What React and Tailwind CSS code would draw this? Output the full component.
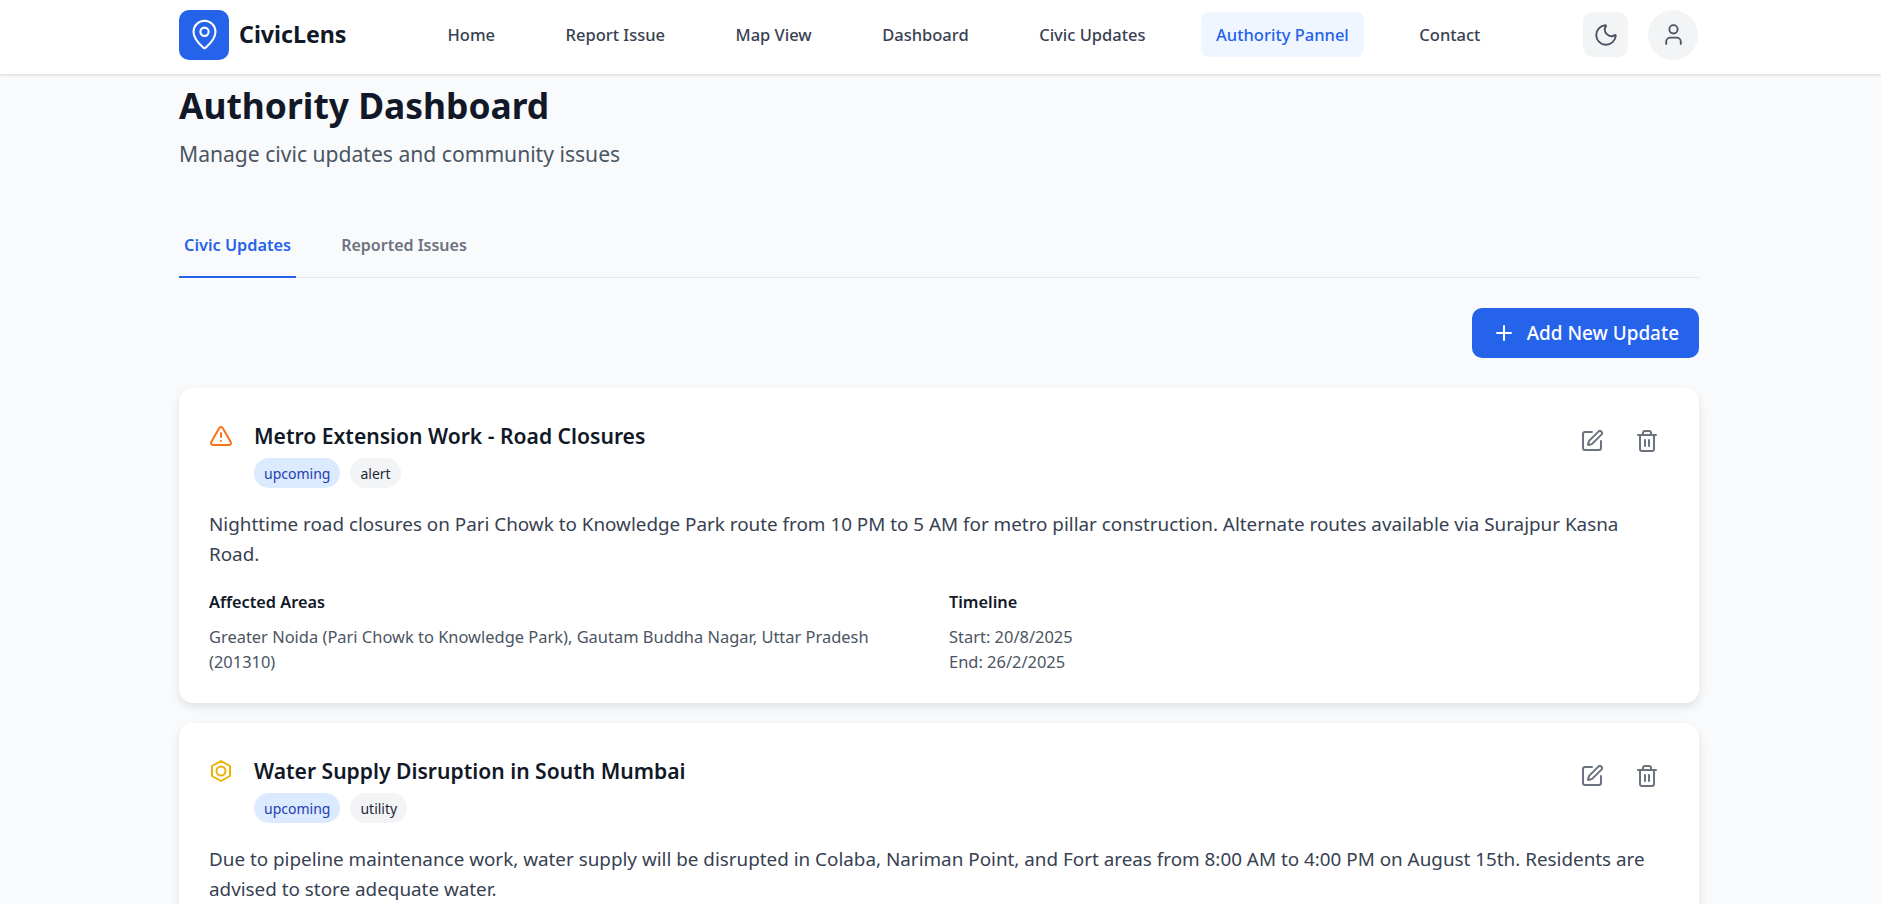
import { MapPin, Moon, User, Plus, SquarePen, Trash2, TriangleAlert } from 'lucide-react'

const navItems = ['Home', 'Report Issue', 'Map View', 'Dashboard', 'Civic Updates', 'Authority Pannel', 'Contact']

const updates = [
  {
    title: 'Metro Extension Work - Road Closures',
    type: 'alert',
    description:
      'Nighttime road closures on Pari Chowk to Knowledge Park route from 10 PM to 5 AM for metro pillar construction. Alternate routes available via Surajpur Kasna Road.',
    areas: 'Greater Noida (Pari Chowk to Knowledge Park), Gautam Buddha Nagar, Uttar Pradesh (201310)',
    start: '20/8/2025',
    end: '26/2/2025',
  },
  {
    title: 'Water Supply Disruption in South Mumbai',
    type: 'utility',
    description:
      'Due to pipeline maintenance work, water supply will be disrupted in Colaba, Nariman Point, and Fort areas from 8:00 AM to 4:00 PM on August 15th. Residents are advised to store adequate water.',
    areas: 'Colaba, Nariman Point, Fort, South Mumbai, Maharashtra (400001)',
    start: '15/8/2025',
    end: '15/8/2025',
  },
]

function UtilityIcon() {
  return (
    <svg viewBox="0 0 24 24" className="w-6 h-6 text-[#eab308]" fill="none" stroke="currentColor" strokeWidth="2" strokeLinejoin="round">
      <path d="M12 2l9 5v10l-9 5-9-5V7z" />
      <circle cx="12" cy="12" r="4.500" />
    </svg>
  )
}

function UpdateCard({ update }) {
  return (
    <div className="bg-white rounded-[14px] shadow-[0_4px_10px_rgba(0,0,0,0.1)] px-[30px] pt-[34px] pb-[29px]">
      <div className="flex justify-between">
        <div className="flex">
          <div className="w-[45px] pt-[2px] shrink-0">
            {update.type === 'alert' ? <TriangleAlert className="w-6 h-6 text-[#f97316]" /> : <UtilityIcon />}
          </div>
          <div>
            <h3 className="text-[21.100px] leading-[28px] font-semibold text-[#111827]">{update.title}</h3>
            <div className="flex gap-[10px] mt-[8px]">
              <span className="h-[30px] px-[10px] flex items-center rounded-full bg-[#dbeafe] text-[#1e40af] text-[14px]">upcoming</span>
              <span className="h-[30px] px-[10px] flex items-center rounded-full bg-[#f3f4f6] text-[#1f2937] text-[14px]">{update.type}</span>
            </div>
          </div>
        </div>
        <div className="flex gap-[31px] pr-[10px] pt-[7px] text-[#6b7280]">
          <SquarePen className="w-6 h-6" />
          <Trash2 className="w-6 h-6" />
        </div>
      </div>
      <p className="mt-[21px] text-[18.850px] leading-[30px] text-[#374151]">{update.description}</p>
      <div className="grid grid-cols-2 gap-[20px] mt-[21px]">
        <div>
          <h4 className="text-[16.300px] leading-[24px] font-semibold text-[#111827]">Affected Areas</h4>
          <p className="mt-[10px] text-[16.450px] leading-[25px] text-[#4b5563]">{update.areas}</p>
        </div>
        <div>
          <h4 className="text-[16.300px] leading-[24px] font-semibold text-[#111827]">Timeline</h4>
          <p className="mt-[10px] text-[16.450px] leading-[25px] text-[#4b5563]">Start: {update.start}</p>
          <p className="text-[16.450px] leading-[25px] text-[#4b5563]">End: {update.end}</p>
        </div>
      </div>
    </div>
  )
}

export default function App() {
  return (
    <div className="h-[904px] overflow-hidden bg-[#f9fafb] font-['Noto_Sans',sans-serif]">
      <header className="h-[74px] bg-white shadow-[0_1px_3px_rgba(0,0,0,0.15)] relative">
        <div className="w-[1520px] ml-[179px] h-full pb-[5px] flex items-center">
          <div className="w-[50px] h-[50px] rounded-[10px] bg-[#2563eb] flex items-center justify-center text-white">
            <MapPin className="w-[33px] h-[33px]" strokeWidth={1.5} />
          </div>
          <span className="ml-[10px] text-[23.200px] font-bold text-[#111827]">CivicLens</span>
          <nav className="flex ml-[86px] gap-[40.500px]">
            {navItems.map((item) => (
              <a
                key={item}
                className={`h-[45px] px-[15px] pt-[2px] flex items-center rounded-[8px] text-[16.500px] font-medium ${
                  item === 'Authority Pannel' ? 'bg-[#eff6ff] text-[#2563eb]' : 'text-[#374151]'
                }`}
              >
                {item}
              </a>
            ))}
          </nav>
          <div className="ml-auto pr-[1px] flex items-center gap-[20px]">
            <button className="w-[45px] h-[45px] rounded-[10px] bg-[#f3f4f6] flex items-center justify-center text-[#4b5563]">
              <Moon className="w-[26px] h-[26px]" strokeWidth={1.8} />
            </button>
            <button className="w-[50px] h-[50px] rounded-full bg-[#f3f4f6] flex items-center justify-center text-[#4b5563]">
              <User className="w-[25px] h-[25px]" strokeWidth={1.8} />
            </button>
          </div>
        </div>
      </header>
      <main className="w-[1520px] ml-[179px]">
        <h1 className="text-[35.400px] leading-[48px] mt-[7px] font-bold text-[#111827]">Authority Dashboard</h1>
        <p className="text-[21.100px] leading-[30px] mt-[10px] text-[#4b5563]">Manage civic updates and community issues</p>
        <div className="flex gap-[40px] mt-[45px] border-b border-[#e5e7eb] h-[64px]">
          <button className="px-[5px] h-[64px] text-[16.300px] font-semibold text-[#2563eb] border-b-2 border-[#2563eb]">Civic Updates</button>
          <button className="px-[5px] pb-[2px] h-[64px] text-[16px] font-semibold text-[#6b7280]">Reported Issues</button>
        </div>
        <div className="flex justify-end mt-[30px]">
          <button className="h-[50px] px-[20px] rounded-[10px] bg-[#2563eb] text-white flex items-center gap-[11px] text-[18.900px] font-medium">
            <Plus className="w-6 h-6" />
            Add New Update
          </button>
        </div>
        <div className="flex flex-col gap-[20px] mt-[30px]">
          {updates.map((u) => (
            <UpdateCard key={u.title} update={u} />
          ))}
        </div>
      </main>
    </div>
  )
}
